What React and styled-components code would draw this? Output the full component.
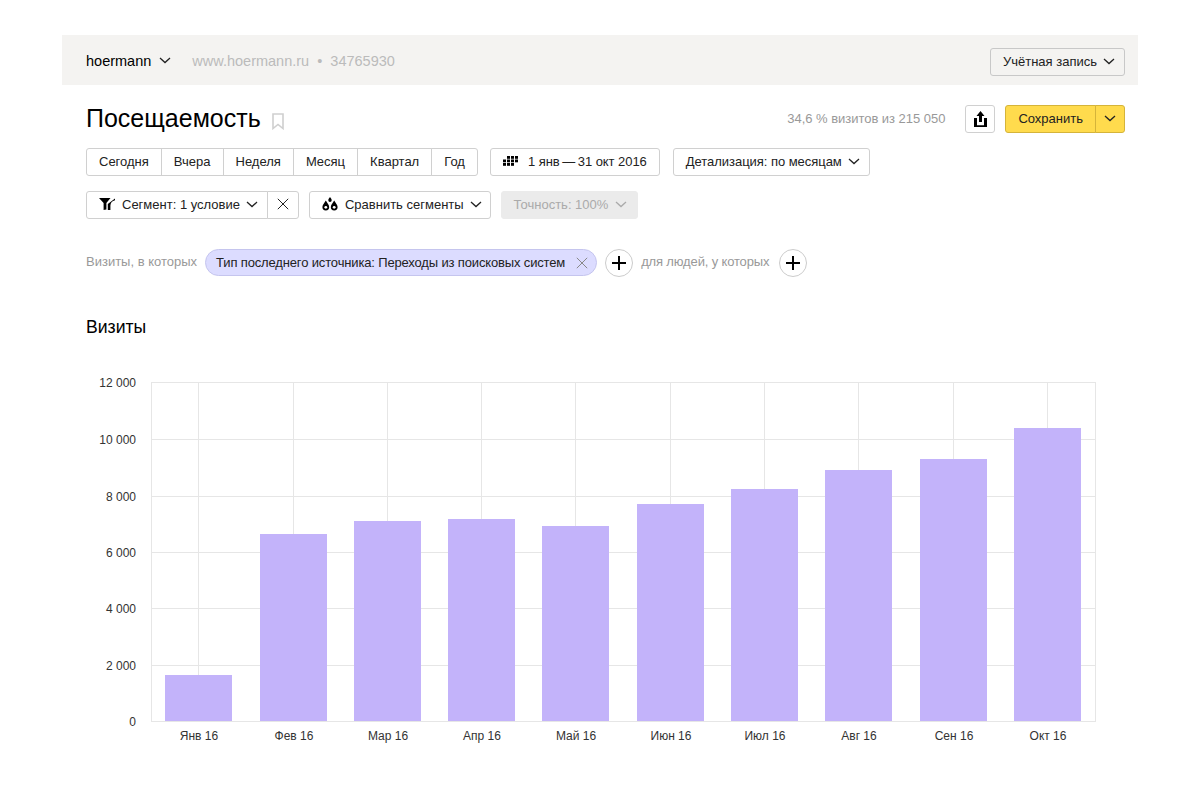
import React from 'react'
import styled, { createGlobalStyle } from 'styled-components'

const GlobalStyle = createGlobalStyle`
  html, body {
    margin: 0;
    background: #fff;
  }
  body {
    font-family: "Liberation Sans", Arial, sans-serif;
    font-size: 13px;
    color: #222;
  }
`

const Page = styled.div`
  width: 1076px;
  margin: 35px auto 0;
`

const Header = styled.header`
  height: 50px;
  padding: 0 13px 0 24px;
  display: flex;
  align-items: center;
  background: #f4f3f1;
`

const Counter = styled.div`
  display: flex;
  align-items: center;
  gap: 8px;
  padding-top: 1px;
  font-size: 14.5px;
  color: #000;
`

const Site = styled.div`
  margin-left: 21px;
  padding-top: 1px;
  font-size: 14.5px;
  color: #bbb;
  flex: 1;
`

const Content = styled.main`
  padding: 0 13px 0 24px;
`

const TitleRow = styled.div`
  display: flex;
  align-items: center;
  height: 28px;
  margin: 20px 0 15px;
`

const Title = styled.h1`
  margin: 0 0 2px;
  font-size: 25px;
  font-weight: 400;
  color: #000;
`

const BookmarkWrap = styled.span`
  display: flex;
  margin: 5px 0 0 11px;
`

const Stat = styled.div`
  margin: 0 0 2px auto;
  color: #999;
  font-size: 13px;
  letter-spacing: -0.03px;
`

const Row = styled.div`
  display: flex;
  margin-bottom: 15px;
`

const Button = styled.button`
  height: 28px;
  padding: 0 ${p => p.$right || p.$pad || 12}px 2px ${p => p.$pad || 12}px;
  margin: 0 0 0 ${p => p.$left || 0}px;
  display: flex;
  align-items: center;
  gap: ${p => p.$gap || 6}px;
  flex: none;
  box-sizing: border-box;
  background: #fff;
  border: 1px solid #d0d0d0;
  border-radius: 3px;
  font: 13px "Liberation Sans", Arial, sans-serif;
  letter-spacing: ${p => p.$spacing || 0}px;
  color: #222;
`

const AccountButton = styled(Button)`
  margin-top: 4px;
  background: #f4f3f1;
  border-color: #c8c8c8;
`

const ShareButton = styled(Button)`
  width: 30px;
  padding: 0;
  justify-content: center;
`

const ButtonGroup = styled.div`
  display: flex;
  flex: none;
  margin-left: ${p => p.$left || 0}px;

  & > button {
    border-radius: 0;
    margin-left: -1px;
  }
  & > button:first-child {
    border-radius: 3px 0 0 3px;
    margin-left: 0;
  }
  & > button:last-child {
    border-radius: 0 3px 3px 0;
  }
`

const SaveButton = styled(Button)`
  background: #ffdb4d;
  border-color: #d5b43a;
`

const DisabledButton = styled(Button)`
  background: #ebebeb;
  border-color: #ebebeb;
  color: #aaa;
`

const FilterRow = styled.div`
  display: flex;
  align-items: flex-start;
  height: 28px;
  margin-top: 30px;
`

const FilterLabel = styled.span`
  color: #999;
  line-height: 26px;
  letter-spacing: ${p => p.$tight ? '-0.15px' : 0};
  margin-right: ${p => p.$right}px;
  margin-left: ${p => p.$left || 0}px;
`

const Pill = styled.div`
  height: 27px;
  box-sizing: border-box;
  display: flex;
  align-items: center;
  padding: 0 8px 0 10px;
  background: #dcdcff;
  border: 1px solid #c5c5ee;
  border-radius: 14px;
  color: #222;
`

const PillText = styled.span`
  margin-right: 11px;
  letter-spacing: -0.15px;
`

const PlusButton = styled.button`
  width: 28px;
  height: 28px;
  margin-left: 8px;
  padding: 0;
  display: flex;
  align-items: center;
  justify-content: center;
  background: #fff;
  border: 1px solid #ccc;
  border-radius: 50%;
`

const SectionTitle = styled.h2`
  margin: 40px 0 0;
  font-size: 17.6px;
  line-height: 20px;
  font-weight: 400;
  color: #000;
`

const ChartSvg = styled.svg`
  display: block;
  margin: 33px 0 0 -24px;
`

const AxisText = styled.text`
  font-family: "Liberation Sans", Arial, sans-serif;
  font-size: 12px;
  fill: #333;
`

const Chevron = ({ color = '#222' }) => (
  <svg width="12" height="7" viewBox="0 0 12 7" fill="none">
    <path d="M1 1l5 4.6L11 1" stroke={color} strokeWidth="1.3" />
  </svg>
)

const Cross = ({ color = '#222', size = 12 }) => (
  <svg width={size} height={size} viewBox="0 0 12 12" fill="none">
    <path d="M.8.8l10.4 10.4M11.2.8L.8 11.2" stroke={color} strokeWidth="1" />
  </svg>
)

const Plus = () => (
  <svg width="14" height="14" viewBox="0 0 14 14">
    <path d="M6 0h2v6h6v2H8v6H6V8H0V6h6z" fill="#000" />
  </svg>
)

const Bookmark = () => (
  <svg width="12" height="17" viewBox="0 0 12 17" fill="none">
    <path d="M1 1h10v14.5l-5-4-5 4z" stroke="#cfcfcf" strokeWidth="1.6" />
  </svg>
)

const ShareIcon = () => (
  <svg width="13" height="16" viewBox="0 0 13 16">
    <path d="M6.5 0L10.5 5H8v6H5V5H2.500z" fill="#000" />
    <path d="M0 7h3v7.200h7V7h3v9H0z" fill="#000" />
  </svg>
)

// top row lacks its first cell, bottom row its last
const GridIcon = () => (
  <svg width="15" height="10" viewBox="0 0 15 10" fill="#000">
    {[0, 1, 2].map(r =>
      [0, 1, 2, 3].map(c =>
        (r === 0 && c === 0) || (r === 2 && c === 3)
          ? null
          : <rect key={`${r}-${c}`} x={c * 4} y={r * 3.5} width="3" height="2.8" />
      )
    )}
  </svg>
)

const FilterIcon = () => (
  <svg width="17" height="12" viewBox="0 0 17 12" fill="#000">
    <path d="M0 0h11.500L7.400 5v6.500L4.600 12V5z" />
    <path d="M16 .5v1.700c-2.800.6-4.600 2.600-4.600 5.300V12H8.800V6z" />
  </svg>
)

const DropsIcon = () => (
  <svg width="17" height="14" viewBox="0 0 17 14">
    <path d="M3.800 3.500c1 2.200 3.400 4 3.400 6.500a3.400 3.400 0 0 1-6.800 0c0-2.500 2.400-4.300 3.400-6.500z" fill="#000" />
    <circle cx="3.800" cy="10.300" r="1.400" fill="#fff" />
    <path d="M12.200 3.500c1 2.200 3.400 4 3.400 6.500a3.400 3.400 0 0 1-6.800 0c0-2.500 2.400-4.300 3.400-6.500z" fill="#000" />
    <circle cx="12.200" cy="10.300" r="1.400" fill="#fff" />
    <path d="M8 0c.6 1.200 1.700 2 1.700 3.200a1.700 1.700 0 0 1-3.400 0C6.300 2 7.400 1.200 8 0z" fill="#000" />
  </svg>
)

const periods = ['Сегодня', 'Вчера', 'Неделя', 'Месяц', 'Квартал', 'Год']

const yTicks = [
  { label: '12 000', y: 382.5 },
  { label: '10 000', y: 439.5 },
  { label: '8 000', y: 496.5 },
  { label: '6 000', y: 552.5 },
  { label: '4 000', y: 608.5 },
  { label: '2 000', y: 665.5 },
  { label: '0', y: 721.5 },
]

const bars = [
  { label: 'Янв 16', x: 165, top: 675 },
  { label: 'Фев 16', x: 260, top: 534 },
  { label: 'Мар 16', x: 354, top: 521 },
  { label: 'Апр 16', x: 448, top: 519 },
  { label: 'Май 16', x: 542, top: 526 },
  { label: 'Июн 16', x: 637, top: 504 },
  { label: 'Июл 16', x: 731, top: 489 },
  { label: 'Авг 16', x: 825, top: 470 },
  { label: 'Сен 16', x: 920, top: 459 },
  { label: 'Окт 16', x: 1014, top: 428 },
]

// chart is drawn in page coordinates, the viewBox takes care of the offset
const Chart = () => (
  <ChartSvg width="1076" height="390" viewBox="62 370 1076 390">
    {yTicks.map(t => (
      <g key={t.label}>
        <line x1="151" x2="1095.500" y1={t.y} y2={t.y} stroke="#e6e6e6" />
        <AxisText x="136" y={t.y + 4} textAnchor="end">{t.label}</AxisText>
      </g>
    ))}
    <line x1="151.500" x2="151.500" y1="382" y2="722" stroke="#e6e6e6" />
    <line x1="1095.500" x2="1095.500" y1="382" y2="722" stroke="#e6e6e6" />
    {bars.map(b => (
      <g key={b.label}>
        <line x1={b.x + 33.500} x2={b.x + 33.500} y1="382" y2="721" stroke="#e6e6e6" />
        <rect x={b.x} y={b.top} width="67" height={721 - b.top} fill="#c3b3fa" />
        <AxisText x={b.x + 34} y="740" textAnchor="middle">{b.label}</AxisText>
      </g>
    ))}
  </ChartSvg>
)

export default function App() {
  return (
    <Page>
      <GlobalStyle />
      <Header>
        <Counter>hoermann <Chevron /></Counter>
        <Site>www.hoermann.ru &nbsp;•&nbsp; 34765930</Site>
        <AccountButton $right={9}>Учётная запись <Chevron /></AccountButton>
      </Header>
      <Content>
        <TitleRow>
          <Title>Посещаемость</Title>
          <BookmarkWrap><Bookmark /></BookmarkWrap>
          <Stat>34,6 % визитов из 215 050</Stat>
          <ShareButton $left={20}><ShareIcon /></ShareButton>
          <ButtonGroup $left={10}>
            <SaveButton>Сохранить</SaveButton>
            <SaveButton $pad={8}><Chevron /></SaveButton>
          </ButtonGroup>
        </TitleRow>
        <Row>
          <ButtonGroup>
            {periods.map(p => <Button key={p}>{p}</Button>)}
          </ButtonGroup>
          <Button $left={12} $gap={10} $spacing={-0.05}><GridIcon /> 1 янв{'\u2009'}—{'\u2009'}31 окт 2016</Button>
          <Button $left={13} $right={9} $spacing={-0.04}>Детализация: по месяцам <Chevron /></Button>
        </Row>
        <Row>
          <ButtonGroup>
            <Button $right={9}><FilterIcon /> Сегмент: 1 условие <Chevron /></Button>
            <Button $pad={9}><Cross /></Button>
          </ButtonGroup>
          <Button $left={10} $right={8}><DropsIcon /> Сравнить сегменты <Chevron /></Button>
          <DisabledButton $left={10} $right={10} $gap={7}>Точность: 100% <Chevron color="#aaa" /></DisabledButton>
        </Row>
        <FilterRow>
          <FilterLabel $right={8}>Визиты, в которых</FilterLabel>
          <Pill>
            <PillText>Тип последнего источника: Переходы из поисковых систем</PillText>
            <Cross color="#888" />
          </Pill>
          <PlusButton><Plus /></PlusButton>
          <FilterLabel $tight $left={8} $right={2}>для людей, у которых</FilterLabel>
          <PlusButton><Plus /></PlusButton>
        </FilterRow>
        <SectionTitle>Визиты</SectionTitle>
        <Chart />
      </Content>
    </Page>
  )
}
